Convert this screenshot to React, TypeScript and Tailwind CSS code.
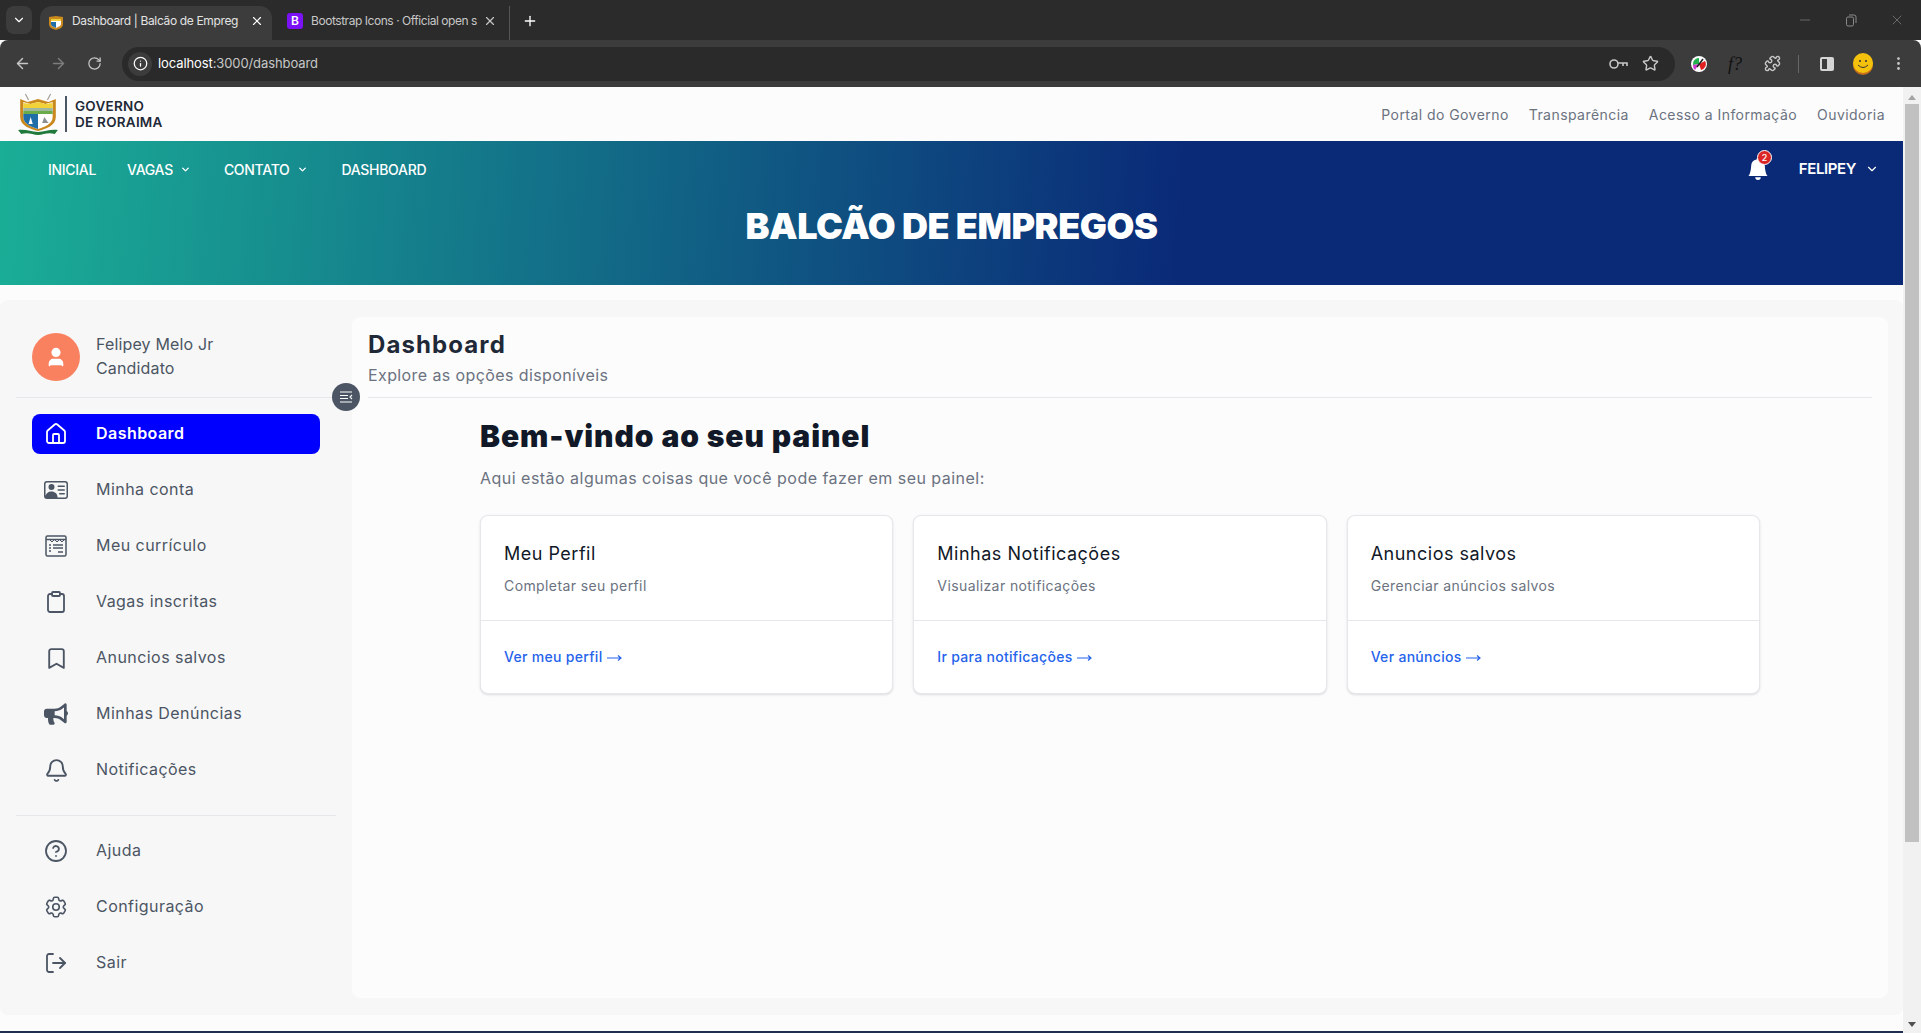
import { ChevronDown, ArrowLeft, ArrowRight, RotateCw, Info, Star, Puzzle, EllipsisVertical, Plus, X, Minus, User, House, Clipboard, Bookmark, Bell, CircleHelp, LogOut } from "lucide-react";
import { BsBellFill, BsPersonVcard } from "react-icons/bs";
import { FaBullhorn } from "react-icons/fa";
import { HiOutlineCog6Tooth } from "react-icons/hi2";

const font = { fontFamily: '"Inter", "Noto Sans", sans-serif' };

function Crest() {
  return (
    <svg width="44" height="42" viewBox="0 0 42 42" preserveAspectRatio="none">
      <path d="M4 6 L11 9 L21 6 L31 9 L38 6 L38 24 C38 33 28 36 21 38 C14 36 4 33 4 24 Z" fill="#c9891e" />
      <path d="M7 9 L14 11 L21 9 L28 11 L35 9 L35 24 C35 31 27 34 21 36 C15 34 7 31 7 24 Z" fill="#fff" />
      <path d="M7 10 L14 11 L21 9 L28 11 L35 10 L35 15 L7 15 Z" fill="#f2d23b" />
      <rect x="7" y="15" width="28" height="3" fill="#9fb8a0" />
      <rect x="7" y="18" width="28" height="3" fill="#6cab4a" />
      <path d="M7 21 L21 21 L21 36 C15 34 7 31 7 24 Z" fill="#1f6ea8" />
      <path d="M12 31 L14 24 L16 31 Z" fill="#fff" />
      <path d="M25 30 L27 24 L31 30 Z" fill="#8a8f94" />
      <path d="M2 37 C10 36 14 39 21 39 C28 39 32 36 40 37 L37 41 C30 39 26 42 21 42 C16 42 12 39 5 41 Z" fill="#1f7a3c" />
      <path d="M12 7 L9 1 M30 7 L33 1" stroke="#a8a29a" strokeWidth="1.2" />
    </svg>
  );
}

function Crest2() {
  return (
    <svg width="16" height="16" viewBox="0 0 16 16">
      <path d="M1 2 L8 1 L15 2 L15 9 C15 13 11 14 8 15 C5 14 1 13 1 9 Z" fill="#c9891e" />
      <path d="M3 4 H13 V9 C13 11 10 12 8 13 C6 12 3 11 3 9 Z" fill="#fff" />
      <rect x="3" y="4" width="10" height="2" fill="#f2d23b" />
      <path d="M3 7 H8 V13 C6 12 3 11 3 9 Z" fill="#1f6ea8" />
    </svg>
  );
}

function ResumeIcon() {
  return (
    <svg width="22" height="22" viewBox="0 0 22 22" fill="none" stroke="#4b5563" strokeWidth="1.5">
      <rect x="1" y="1" width="20" height="20" rx="1.5" />
      <path d="M1 4.5 H21" />
      <path d="M5 5 L7 7 L9 5 M10 5 L12 7 L14 5 M15 5 L17 7 L19 5" strokeWidth="1" />
      <path d="M4 10 H6 M8 10 H18 M4 13 H6 M8 13 H18 M4 16 H6 M13 17 H18" strokeWidth="1.4" />
    </svg>
  );
}

function CollapseIcon() {
  return (
    <svg width="14" height="14" viewBox="0 0 14 14" fill="none" stroke="#fff" strokeWidth="1.1">
      <path d="M1 2 H13 M1 5.5 H9 M1 8.5 H9 M1 12 H13 M13 5 L11 7 L13 9" />
    </svg>
  );
}

function KeyIcon() {
  return (
    <svg width="19" height="12" viewBox="0 0 19 12" fill="none" stroke="currentColor" strokeWidth="1.6">
      <circle cx="5" cy="6" r="4" />
      <path d="M9 5 H18 V8 M14 5 V8" />
    </svg>
  );
}

function LongArrow() {
  return (
    <svg width="15" height="8" viewBox="0 0 15 8" fill="none" stroke="currentColor" strokeWidth="1.2" className="inline-block ml-[4px]">
      <path d="M0 4 H14 M11 1.5 L14 4 L11 6.5" />
    </svg>
  );
}

const menu = [
  { label: "Minha conta", icon: <BsPersonVcard size={24} className="text-[#4b5563]" /> },
  { label: "Meu currículo", icon: <ResumeIcon /> },
  { label: "Vagas inscritas", icon: <Clipboard size={24} strokeWidth={1.8} /> },
  { label: "Anuncios salvos", icon: <Bookmark size={25} strokeWidth={1.8} /> },
  { label: "Minhas Denúncias", icon: <FaBullhorn size={24} /> },
  { label: "Notificações", icon: <Bell size={25} strokeWidth={1.8} /> },
];

const bottomMenu = [
  { label: "Ajuda", icon: <CircleHelp size={24} strokeWidth={1.8} /> },
  { label: "Configuração", icon: <HiOutlineCog6Tooth size={26} /> },
  { label: "Sair", icon: <LogOut size={24} strokeWidth={1.8} className="rotate-180 -scale-x-100" /> },
];

const cards = [
  { title: "Meu Perfil", desc: "Completar seu perfil", link: "Ver meu perfil" },
  { title: "Minhas Notificações", desc: "Visualizar notificações", link: "Ir para notificações" },
  { title: "Anuncios salvos", desc: "Gerenciar anúncios salvos", link: "Ver anúncios" },
];

function SideItem({ label, icon }: { label: string; icon: React.ReactNode }) {
  return (
    <div className="h-10 ml-8 rounded-lg flex items-center text-[#4b5563]">
      <span className="w-12 flex justify-center shrink-0">{icon}</span>
      <span className="ml-4 -mt-[2px] text-[16px] tracking-[0.45px]">{label}</span>
    </div>
  );
}

export default function App() {
  return (
    <div className="h-[1033px] w-[1921px] overflow-hidden flex flex-col bg-[#fcfcfc]" style={font}>
      {/* Browser tabs */}
      <div className="h-10 shrink-0 bg-[#2b2b2b] flex items-end text-[#c7c7c7]">
        <div className="w-[26px] h-[28px] ml-[6px] mb-[6px] rounded-lg bg-[#3c3c3c] flex items-center justify-center">
          <ChevronDown size={14} className="text-white" />
        </div>
        <div className="w-[232px] h-[34px] ml-2 rounded-t-xl bg-[#3c3c3c] flex items-center pl-2 pr-2 text-[12px] text-[#e3e3e3]">
          <Crest2 />
          <span className="ml-2 -mt-[4px] whitespace-nowrap tracking-[-0.35px]">Dashboard | Balcão de Empreg</span>
          <X size={14} className="ml-auto -mt-[4px] text-white" />
        </div>
        <div className="w-[238px] h-[34px] flex items-center pl-[15px] pr-[13px] text-[12px]">
          <span className="-mt-[4px] w-4 h-4 rounded-[3px] bg-[#7a12f5] text-white text-[12px] font-semibold flex items-center justify-center">B</span>
          <span className="ml-2 -mt-[4px] whitespace-nowrap tracking-[-0.45px]">Bootstrap Icons · Official open s</span>
          <X size={14} className="ml-auto -mt-[4px]" />
        </div>
        <div className="h-[34px] flex items-center border-l border-[#555] pl-3 -ml-[1px]">
          <Plus size={16} className="text-white -mt-[4px]" />
        </div>
        <div className="ml-auto h-10 flex items-center gap-[31px] pr-4 text-[#8a8a8a]">
          <Minus size={16} strokeWidth={1} />
          <svg width="14" height="14" viewBox="0 0 14 14" fill="none" stroke="currentColor"><rect x="2.5" y="4" width="7" height="9" rx="1.5" /><path d="M5 2 H10 A2 2 0 0 1 12 4 V10" /></svg>
          <X size={16} strokeWidth={1} />
        </div>
      </div>

      {/* Browser toolbar */}
      <div className="h-[47px] shrink-0 bg-[#3c3c3c] rounded-t-lg flex items-center pl-[14px] text-[#c7c7c7]">
        <ArrowLeft size={17} />
        <ArrowRight size={17} className="ml-[19px] text-[#7d7d7d]" />
        <RotateCw size={15} className="ml-[20px]" />
        <div className="ml-[20px] h-[34px] w-[1553px] rounded-full bg-[#2a2a2a] flex items-center pl-[6px] pr-[16px]">
          <span className="w-6 h-6 rounded-full bg-[#3c3c3c] flex items-center justify-center">
            <Info size={15} className="text-white" />
          </span>
          <span className="ml-[6px] text-[13px] tracking-[-0.1px] text-white">localhost<span className="text-[#c7c7c7]">:3000/dashboard</span></span>
          <span className="ml-auto"><KeyIcon /></span>
          <Star size={17} className="ml-[14px]" />
        </div>
        <div className="flex items-center ml-[16px]">
          <svg width="16" height="16" viewBox="0 0 16 16">
            <circle cx="8" cy="8" r="8" fill="#fff" />
            <path d="M2 9 A6 6 0 0 1 8 2 L8 8 Z" fill="#22b14c" />
            <path d="M8 8 L14 5 A6 6 0 0 1 10 14 Z" fill="#e02020" />
            <path d="M8 8 L4 14 A6 6 0 0 1 2 9 Z" fill="#d13ad1" />
            <path d="M6 11 L12 3" stroke="#222" strokeWidth="1.5" />
          </svg>
          <span className="ml-[21px] w-4 text-[18px] leading-none italic text-[#111]" style={{ fontFamily: '"Liberation Serif", serif' }}>f?</span>
          <Puzzle size={17} className="ml-[20px]" />
          <span className="ml-[17px] w-px h-[18px] bg-[#666]" />
          <span className="ml-[21px] w-[14px] h-[14px] rounded-[2px] border-2 border-[#d5d5d5] flex justify-end">
            <span className="w-[5px] bg-[#d5d5d5]" />
          </span>
          <svg width="20" height="22" viewBox="0 0 20 22" className="ml-[19px]">
            <circle cx="10" cy="12" r="10" fill="#c9701a" />
            <circle cx="10" cy="10" r="10" fill="#f4c20d" />
            <circle cx="7" cy="8" r="1" fill="#333" />
            <circle cx="13" cy="8" r="1" fill="#333" />
            <path d="M5 12 Q10 17 15 12" stroke="#333" fill="none" strokeWidth="1" />
          </svg>
          <EllipsisVertical size={17} className="ml-[17px]" />
        </div>
      </div>

      <div className="flex-1 min-h-0 flex">
        <div className="w-[1903px] flex flex-col">
          {/* Top strip */}
          <header className="h-[54px] shrink-0 bg-[#fcfcfc] flex items-center pl-[16px] pr-[18px]">
            <Crest />
            <span className="ml-[5px] w-[2px] h-9 bg-[#4b5563]" />
            <span className="ml-2 text-[13.5px] leading-[16px] font-semibold text-[#1f2937] tracking-[0.25px]">
              GOVERNO<br />DE RORAIMA
            </span>
            <nav className="ml-auto flex gap-5 text-[14px] text-[#6b7280] tracking-[0.44px]">
              <span>Portal do Governo</span>
              <span>Transparência</span>
              <span>Acesso a Informação</span>
              <span>Ouvidoria</span>
            </nav>
          </header>

          {/* Banner */}
          <section className="h-[144px] shrink-0 bg-[linear-gradient(95deg,#1aae96_0%,#0a2a78_62%)] text-white">
            <div className="h-[56px] flex items-center pl-12 pr-[24px] text-[14px] font-medium tracking-[-0.3px]">
              <span>INICIAL</span>
              <span className="ml-[31px] flex items-center gap-[7px]">VAGAS <ChevronDown size={11} strokeWidth={3} /></span>
              <span className="ml-[33px] flex items-center gap-[7px]">CONTATO <ChevronDown size={11} strokeWidth={3} /></span>
              <span className="ml-[34px]">DASHBOARD</span>
              <span className="ml-auto relative mr-[30px]">
                <BsBellFill size={22} />
                <span className="absolute -top-[8px] left-[10px] w-[15px] h-[15px] rounded-full bg-[#dc2626] border border-white text-[9px] flex items-center justify-center">2</span>
              </span>
              <span className="font-semibold text-[15px] tracking-[-0.4px]">FELIPEY</span>
              <ChevronDown size={14} className="ml-[9px]" />
            </div>
            <h1 className="text-center text-[36px] leading-[40px] font-black tracking-[-0.45px] mt-[9px]">BALCÃO DE EMPREGOS</h1>
          </section>

          {/* Body */}
          <div className="h-[15px] shrink-0" />
          <div className="h-[715px] shrink-0 rounded-lg bg-[#f7f7f8] flex relative">
            <aside className="w-[352px] shrink-0 pr-4 flex flex-col">
              <div className="ml-8 mt-[33px] flex items-center h-12">
                <span className="w-12 h-12 rounded-full bg-[#f98160] flex items-center justify-center">
                  <User size={22} fill="#fff" className="text-white" />
                </span>
                <span className="ml-4 -mt-[2px] text-[16px] leading-6 text-[#4b5563] tracking-[0.15px]">Felipey Melo Jr<br />Candidato</span>
              </div>
              <div className="ml-4 mt-4 h-px bg-[#e5e7eb]" />
              <div className="mt-4 mr-4 ml-8 h-10 rounded-lg bg-[#0000ff] text-white flex items-center mb-4">
                <span className="w-12 flex justify-center shrink-0"><House size={24} strokeWidth={1.8} /></span>
                <span className="ml-4 -mt-[2px] text-[16px] font-semibold tracking-[0.45px]">Dashboard</span>
              </div>
              <div className="flex flex-col gap-4">
                {menu.map((m) => <SideItem key={m.label} label={m.label} icon={m.icon} />)}
              </div>
              <div className="ml-4 mt-[25px] h-px bg-[#e5e7eb]" />
              <div className="mt-[15px] flex flex-col gap-4">
                {bottomMenu.map((m) => <SideItem key={m.label} label={m.label} icon={m.icon} />)}
              </div>
            </aside>

            <button className="absolute left-[332px] top-[83px] w-7 h-7 rounded-full bg-[#4b5563] flex items-center justify-center">
              <CollapseIcon />
            </button>

            <main className="w-[1536px] h-[681px] mt-[17px] rounded-lg bg-[#fcfcfc] px-4">
              <div className="h-[81px] border-b border-[#e5e7eb] pt-3">
                <h2 className="text-[24px] leading-8 font-bold text-[#1f2937] tracking-[1.1px]">Dashboard</h2>
                <p className="text-[16px] leading-6 mt-[2px] text-[#6b7280] tracking-[0.4px]">Explore as opções disponíveis</p>
              </div>
              <div className="w-[1280px] mx-auto">
                <h3 className="mt-5 text-[30px] leading-9 font-black text-[#111827] tracking-[0.92px]">Bem-vindo ao seu painel</h3>
                <p className="mt-3 text-[16px] leading-6 text-[#6b7280] tracking-[0.48px]">Aqui estão algumas coisas que você pode fazer em seu painel:</p>
                <div className="mt-[25px] grid grid-cols-3 gap-5">
                  {cards.map((c) => (
                    <div key={c.title} className="h-[179px] rounded-lg border border-[#e5e7eb] bg-white shadow-sm">
                      <div className="h-[105px] border-b border-[#e5e7eb] pl-[23px] pr-6 pt-[26px]">
                        <h4 className="text-[18px] leading-6 text-[#111827] tracking-[0.5px]">{c.title}</h4>
                        <p className="mt-[10px] text-[14px] leading-5 text-[#6b7280] tracking-[0.4px]">{c.desc}</p>
                      </div>
                      <div className="pl-[23px] pr-6 pt-[26px] text-[14px] leading-5 font-medium text-[#2563eb] tracking-[0.3px]">
                        {c.link}<LongArrow />
                      </div>
                    </div>
                  ))}
                </div>
              </div>
            </main>
          </div>
          <div className="h-4 shrink-0" />
          <div className="flex-1 bg-[#1f2f52]" />
        </div>

        {/* Scrollbar */}
        <div className="w-[18px] bg-[#f1f1f1] flex flex-col items-center relative">
          <span className="mt-[8px] w-0 h-0 border-x-[4px] border-x-transparent border-b-[5px] border-b-[#a3a3a3]" />
          <span className="mt-[4px] w-[14px] h-[738px] bg-[#c1c1c1]" />
          <span className="mt-auto mb-[6px] w-0 h-0 border-x-[4px] border-x-transparent border-t-[5px] border-t-[#505050]" />
        </div>
      </div>
    </div>
  );
}
